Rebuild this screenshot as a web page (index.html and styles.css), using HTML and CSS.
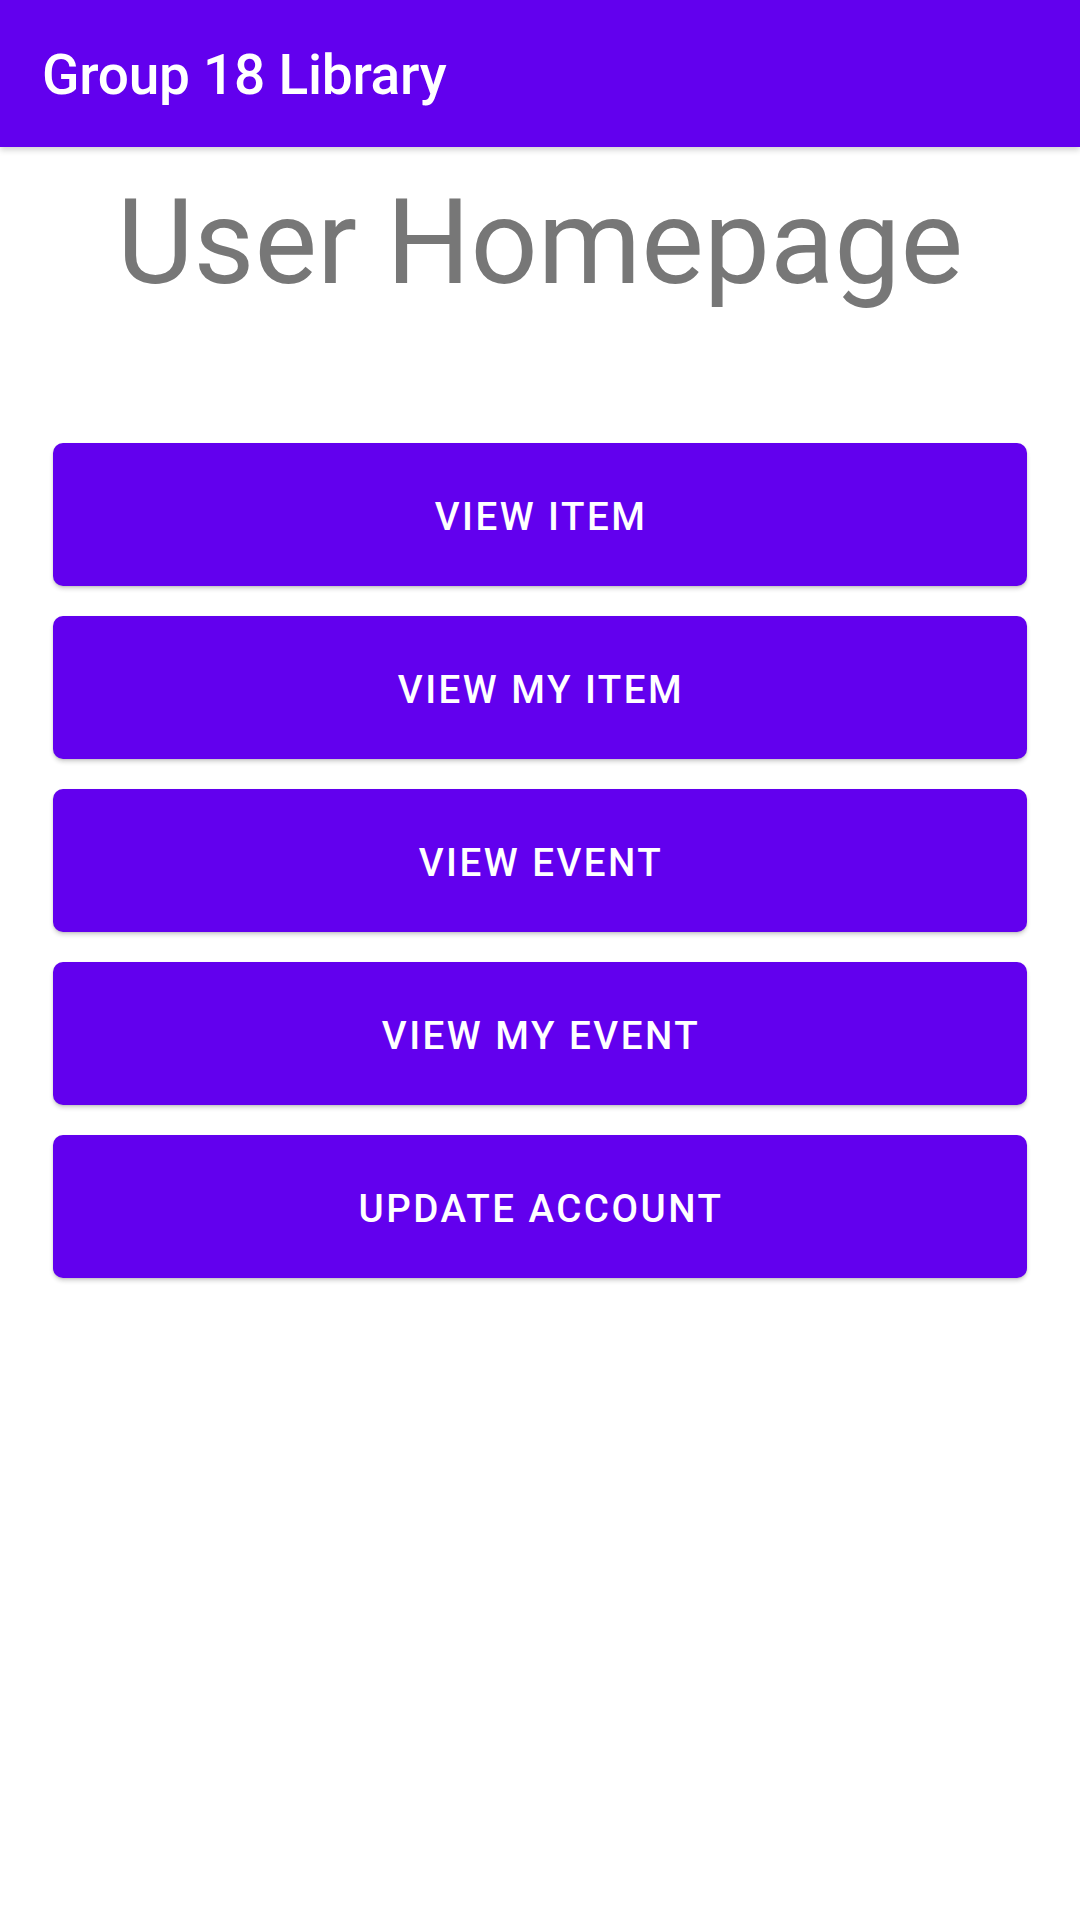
FILE: index.html
```html
<!DOCTYPE html>
<html>
<head>
<meta charset="utf-8">
<link rel="stylesheet" href="styles.css">
</head>
<body>
<header class="appbar">
  <span class="appbar-title">Group 18 Library</span>
</header>
<main class="content">
  <h1 class="page-title">User Homepage</h1>
  <div class="buttons">
    <button class="btn">VIEW ITEM</button>
    <button class="btn">VIEW MY ITEM</button>
    <button class="btn">VIEW EVENT</button>
    <button class="btn">VIEW MY EVENT</button>
    <button class="btn">UPDATE ACCOUNT</button>
  </div>
</main>
</body>
</html>
```
FILE: styles.css
```css
html, body {
  margin: 0;
  padding: 0;
  background: #ffffff;
  font-family: Roboto, "Noto Sans", sans-serif;
}
body {
  width: 1080px;
  height: 1920px;
  overflow: hidden;
}
.appbar {
  height: 147px;
  background: #6200ee;
  display: flex;
  align-items: center;
  padding-left: 42px;
  box-shadow: 0 3px 6px rgba(0,0,0,0.18);
  position: relative;
  z-index: 1;
}
.appbar-title {
  color: #ffffff;
  font-size: 55px;
  font-weight: 500;
  line-height: 1;
  letter-spacing: -0.25px;
  margin-top: 4px;
}
.content {
  display: flex;
  flex-direction: column;
  align-items: stretch;
}
.page-title {
  margin: 37px 0 0 0;
  font-size: 118px;
  font-weight: 400;
  line-height: 118px;
  color: #777777;
  text-align: center;
}
.buttons {
  margin: 141px 53px 0 53px;
  display: flex;
  flex-direction: column;
  gap: 30px;
}
.btn {
  height: 143px;
  border: none;
  border-radius: 10px;
  background: #6200ee;
  color: #ffffff;
  font-family: Roboto, "Noto Sans", sans-serif;
  font-size: 38.5px;
  font-weight: 500;
  letter-spacing: 2.5px;
  box-shadow: 0 3px 4px rgba(0,0,0,0.16), 0 1px 2px rgba(0,0,0,0.1);
  display: flex;
  align-items: center;
  justify-content: center;
  padding: 4px 0 0 2px;
}
```
